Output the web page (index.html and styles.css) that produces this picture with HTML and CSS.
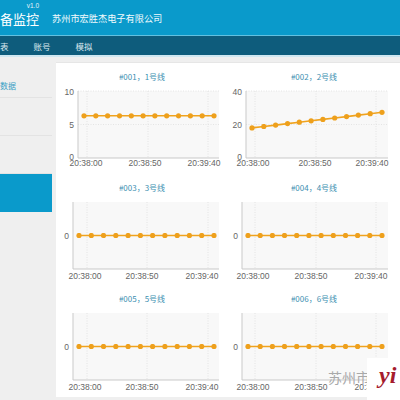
FILE: index.html
```html
<!DOCTYPE html>
<html lang="zh-CN">
<head>
<meta charset="utf-8">
<title>设备监控</title>
<link rel="stylesheet" href="styles.css">
</head>
<body>
<div class="page">
  <header class="top">
    <div class="brand"><span class="title">备监控</span><span class="ver">v1.0</span></div>
    <div class="company">苏州市宏胜杰电子有限公司</div>
  </header>
  <nav class="menu"><span>表</span><span>账号</span><span>模拟</span></nav>
  <div class="content">
    <aside class="side">
      <div class="side-item first">数据</div>
      <div class="side-item"></div>
      <div class="side-item"></div>
      <div class="side-item active"></div>
    </aside>
    <main class="panel">
      <section class="card">
        <div class="card-title">#001，1号线</div>
        <svg class="chart" viewBox="0 0 172 89" width="172" height="89">
          <defs>
            <marker id="dot" markerUnits="userSpaceOnUse" markerWidth="6" markerHeight="6" refX="3" refY="3" viewBox="0 0 6 6"><circle cx="3" cy="3" r="2.6" fill="#eea01c"/></marker>
          </defs>
          <rect class="plot" x="22" y="3" width="141" height="67"/>
          <path class="grid" d="M31 3V70M92 3V70M152 3V70M22 3H163M22 36.5H163"/>
          <path class="axis" d="M22 3V70H163"/>
          <polyline class="series" points="28,27.8 39.8,27.8 51.6,27.8 63.5,27.8 75.3,27.8 87.1,27.8 98.9,27.8 110.7,27.8 122.5,27.8 134.4,27.8 146.2,27.8 158,27.8"/>
          <text class="ylab" x="18" y="7">10</text>
          <text class="ylab" x="18" y="39.5">5</text>
          <text class="ylab" x="18" y="72">0</text>
          <text class="xlab" x="30" y="78">20:38:00</text>
          <text class="xlab" x="89" y="78">20:38:50</text>
          <text class="xlab" x="148" y="78">20:39:40</text>
        </svg>
      </section>
      <section class="card">
        <div class="card-title">#002，2号线</div>
        <svg class="chart" viewBox="0 0 172 89" width="172" height="89">
          <rect class="plot" x="18" y="3" width="142" height="67"/>
          <path class="grid" d="M27 3V70M88 3V70M148 3V70M18 3H160M18 36.5H160"/>
          <path class="axis" d="M18 3V70H160"/>
          <polyline class="series" points="24,39.9 35.8,38.5 47.6,37.1 59.5,35.6 71.3,34.2 83.1,32.8 94.9,31.4 106.7,30 118.5,28.6 130.4,27.1 142.2,25.7 154,24.3"/>
          <text class="ylab" x="14" y="7">40</text>
          <text class="ylab" x="14" y="39.5">20</text>
          <text class="ylab" x="14" y="72">0</text>
          <text class="xlab" x="25" y="78">20:38:00</text>
          <text class="xlab" x="87" y="78">20:38:50</text>
          <text class="xlab" x="144" y="78">20:39:40</text>
        </svg>
      </section>
      <section class="card">
        <div class="card-title">#003，3号线</div>
        <svg class="chart" viewBox="0 0 172 89" width="172" height="89">
          <rect class="plot" x="17" y="3" width="146" height="67"/>
          <path class="grid" d="M31 3V70M91 3V70M152 3V70"/>
          <path class="axis" d="M17 3V70H163"/>
          <polyline class="series" points="23,36.5 35.3,36.5 47.5,36.5 59.8,36.5 72.1,36.5 84.4,36.5 96.6,36.5 108.9,36.5 121.2,36.5 133.4,36.5 145.7,36.5 158,36.5"/>
          <text class="ylab" x="13" y="39.5">0</text>
          <text class="xlab" x="29" y="80">20:38:00</text>
          <text class="xlab" x="86" y="80">20:38:50</text>
          <text class="xlab" x="146" y="80">20:39:40</text>
        </svg>
      </section>
      <section class="card">
        <div class="card-title">#004，4号线</div>
        <svg class="chart" viewBox="0 0 172 89" width="172" height="89">
          <rect class="plot" x="14" y="3" width="146" height="67"/>
          <path class="grid" d="M27 3V70M88 3V70M148 3V70"/>
          <path class="axis" d="M14 3V70H160"/>
          <polyline class="series" points="20,36.5 32.2,36.5 44.4,36.5 56.5,36.5 68.7,36.5 80.9,36.5 93.1,36.5 105.3,36.5 117.5,36.5 129.6,36.5 141.8,36.5 154,36.5"/>
          <text class="ylab" x="10" y="39.5">0</text>
          <text class="xlab" x="25" y="80">20:38:00</text>
          <text class="xlab" x="83" y="80">20:38:50</text>
          <text class="xlab" x="143" y="80">20:39:40</text>
        </svg>
      </section>
      <section class="card">
        <div class="card-title">#005，5号线</div>
        <svg class="chart" viewBox="0 0 172 89" width="172" height="89">
          <rect class="plot" x="17" y="3" width="146" height="67"/>
          <path class="grid" d="M31 3V70M91 3V70M152 3V70"/>
          <path class="axis" d="M17 3V70H163"/>
          <polyline class="series" points="23,36.5 35.3,36.5 47.5,36.5 59.8,36.5 72.1,36.5 84.4,36.5 96.6,36.5 108.9,36.5 121.2,36.5 133.4,36.5 145.7,36.5 158,36.5"/>
          <text class="ylab" x="13" y="39.5">0</text>
          <text class="xlab" x="29" y="80">20:38:00</text>
          <text class="xlab" x="86" y="80">20:38:50</text>
          <text class="xlab" x="146" y="80">20:39:40</text>
        </svg>
      </section>
      <section class="card">
        <div class="card-title">#006，6号线</div>
        <svg class="chart" viewBox="0 0 172 89" width="172" height="89">
          <rect class="plot" x="14" y="3" width="146" height="67"/>
          <path class="grid" d="M27 3V70M88 3V70M148 3V70"/>
          <path class="axis" d="M14 3V70H160"/>
          <polyline class="series" points="20,36.5 32.2,36.5 44.4,36.5 56.5,36.5 68.7,36.5 80.9,36.5 93.1,36.5 105.3,36.5 117.5,36.5 129.6,36.5 141.8,36.5 154,36.5"/>
          <text class="ylab" x="10" y="39.5">0</text>
          <text class="xlab" x="25" y="80">20:38:00</text>
          <text class="xlab" x="83" y="80">20:38:50</text>
          <text class="xlab" x="143" y="80">20:39:40</text>
        </svg>
      </section>
    </main>
  </div>
  <div class="watermark">苏州市</div>
  <div class="logo-box">yi</div>
</div>
</body>
</html>
```

FILE: styles.css
```css
html, body {
  margin: 0;
  padding: 0;
}
body {
  width: 400px;
  height: 400px;
  overflow: hidden;
  background: #efefef;
  font-family: "Noto Sans CJK SC", "Liberation Sans", sans-serif;
}
.page {
  position: relative;
  width: 400px;
  height: 400px;
  overflow: hidden;
}
.top {
  height: 35px;
  background: #0a9acb;
  border-bottom: 1px solid #62c0e0;
  display: flex;
  align-items: center;
  color: #fff;
}
.brand {
  position: relative;
  height: 35px;
  display: flex;
  align-items: center;
  white-space: nowrap;
}
.title {
  font-size: 13px;
  line-height: 13px;
  padding-top: 2px;
  white-space: nowrap;
}
.ver {
  position: absolute;
  right: 0;
  top: 2px;
  font-family: "Liberation Sans", sans-serif;
  font-size: 6.5px;
  line-height: 7px;
  color: #e6f4fa;
}
.company {
  margin-left: 13px;
  font-size: 9.2px;
  line-height: 12px;
  color: #f2fafd;
  white-space: nowrap;
}
.menu {
  height: 19px;
  background: #0e5c7c;
  border-bottom: 2px solid #cfe7f1;
  display: flex;
  align-items: center;
  gap: 25px;
  font-size: 8.5px;
  line-height: 10px;
  color: #dbe9ef;
}
.content {
  display: flex;
  align-items: flex-start;
}
.side {
  width: 52px;
  flex: none;
  background: #efefef;
  height: 343px;
}
.side-item {
  height: 38px;
  box-sizing: border-box;
  border-bottom: 1px solid #e3e3e3;
  font-size: 8px;
  line-height: 10px;
  color: #3aa0c4;
}
.side-item.first {
  height: 41px;
  padding-top: 24px;
}
.side-item.active {
  background: #0a9acb;
  border-bottom: none;
}
.panel {
  flex: 1;
  margin-left: 4px;
  margin-top: 5px;
  padding-top: 3px;
  height: 335px;
  background: #fff;
  border-top: 1px solid #e6e6e6;
  box-sizing: border-box;
  display: grid;
  grid-template-columns: 172px 172px;
  grid-auto-rows: 111px;
  align-content: start;
}
.card {
  display: flex;
  flex-direction: column;
}
.card-title {
  height: 22px;
  line-height: 22px;
  text-align: center;
  font-size: 8px;
  color: #3d8fb1;
}
.chart {
  display: block;
  overflow: visible;
}
.plot {
  fill: #f8f8f8;
}
.grid {
  fill: none;
  stroke: #dedede;
  stroke-width: 0.8;
  stroke-dasharray: 1 1.5;
}
.axis {
  fill: none;
  stroke: #c9c9c9;
  stroke-width: 1;
}
.series {
  fill: none;
  stroke: #f0a31e;
  stroke-width: 1.6;
  marker-start: url(#dot);
  marker-mid: url(#dot);
  marker-end: url(#dot);
}
.ylab, .xlab {
  font-family: "Liberation Sans", sans-serif;
  font-size: 8.5px;
  fill: #666;
}
.ylab {
  text-anchor: end;
}
.xlab {
  text-anchor: middle;
}
.watermark {
  position: absolute;
  left: 328px;
  top: 369px;
  font-size: 14px;
  line-height: 16px;
  color: #a9a9a9;
  white-space: nowrap;
}
.logo-box {
  position: absolute;
  left: 367px;
  top: 358px;
  width: 33px;
  height: 42px;
  background: #fff;
  box-sizing: border-box;
  padding-left: 12px;
  padding-top: 4px;
  font-family: "Liberation Serif", serif;
  font-style: italic;
  font-weight: bold;
  font-size: 24px;
  line-height: 26px;
  color: #a51b2c;
  white-space: nowrap;
  overflow: hidden;
}
```
